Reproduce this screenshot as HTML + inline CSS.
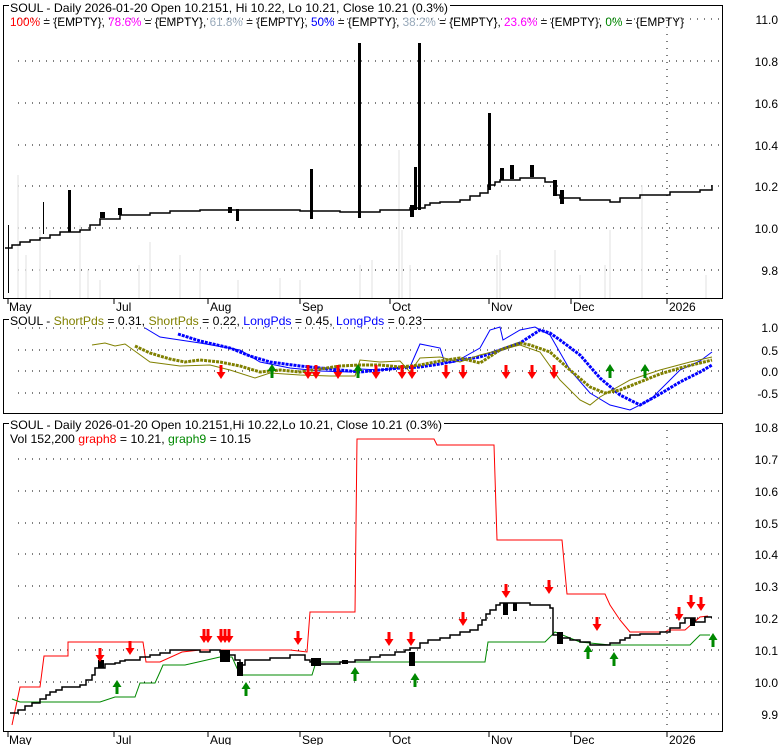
<!DOCTYPE html>
<html><head><meta charset="utf-8"><style>
html,body{margin:0;padding:0;background:#fff;}
svg{display:block;font-family:"Liberation Sans",sans-serif;}
</style></head><body>
<svg width="780" height="745" viewBox="0 0 780 745" xmlns="http://www.w3.org/2000/svg">
<defs>
<g id="dn"><path d="M0,0 l-4.5,-7 h3 v-7 h3 v7 h3 z" fill="#f00"/></g>
<g id="up"><path d="M0,0 l-4.5,7 h3 v7 h3 v-7 h3 z" fill="#080"/></g>
</defs>
<g stroke="#000" stroke-width="1" stroke-dasharray="1,6">
<line x1="18" x2="722" y1="19" y2="19"/><line x1="18" x2="722" y1="61" y2="61"/><line x1="18" x2="722" y1="103" y2="103"/><line x1="18" x2="722" y1="145" y2="145"/><line x1="18" x2="722" y1="186" y2="186"/><line x1="18" x2="722" y1="228" y2="228"/><line x1="18" x2="722" y1="270" y2="270"/>
<line x1="667" x2="667" y1="20" y2="298"/>
<line x1="18" x2="722" y1="328" y2="328"/><line x1="18" x2="722" y1="350" y2="350"/><line x1="18" x2="722" y1="371" y2="371"/><line x1="18" x2="722" y1="393" y2="393"/>
<line x1="18" x2="722" y1="459" y2="459"/><line x1="18" x2="722" y1="491" y2="491"/><line x1="18" x2="722" y1="523" y2="523"/><line x1="18" x2="722" y1="554" y2="554"/><line x1="18" x2="722" y1="586" y2="586"/><line x1="18" x2="722" y1="618" y2="618"/><line x1="18" x2="722" y1="650" y2="650"/><line x1="18" x2="722" y1="682" y2="682"/><line x1="18" x2="722" y1="714" y2="714"/>
<line x1="667" x2="667" y1="430" y2="731"/>
</g>
<g stroke="#ececec" stroke-width="1.5">
<path d="M18 298V175M26 298V255M40 298V230M50 298V290M80 298V225M88 298V270M100 298V280M139 298V265M150 298V242M180 298V255M200 298V270M238 298V280M280 298V278M300 298V280M360 298V265M372 298V260M399 298V150M402 298V230M410 298V265M497 298V255M500 298V250M555 298V250M580 298V275M605 298V265M610 298V230M642 298V185M706 298V275"/>
</g>
<path fill="none" stroke="#000" stroke-width="1.5" d="M5 248H12V245H20V242H30V240H40V238H50V235H60V232H80V230H90V225H100V219H120V215H150V213H170V211H200V210H300V211H340V212H380V210H410V208H425V205H430V203H440V202H460V200H470V196H480V193H488V185H495V182H500V180H520V178H545V182H555V195H560V198H580V200H610V202H620V198H640V195H670V192H700V190H712V185"/>
<g fill="#000">
<rect x="358" y="43" width="3" height="175"/><rect x="418" y="43" width="3" height="167"/><rect x="488" y="113" width="3" height="77"/><rect x="310" y="169" width="3" height="50"/><rect x="68" y="190" width="3" height="42"/><rect x="414" y="167" width="3" height="43"/>
<rect x="8" y="225" width="1" height="68"/><rect x="43" y="202" width="1" height="32"/>
<rect x="100" y="212" width="5" height="6"/><rect x="118" y="208" width="4" height="7"/><rect x="236" y="209" width="3" height="12"/><rect x="228" y="207" width="4" height="6"/><rect x="500" y="168" width="4" height="12"/><rect x="510" y="165" width="4" height="14"/><rect x="530" y="165" width="4" height="12"/><rect x="553" y="180" width="4" height="16"/><rect x="560" y="190" width="4" height="14"/><rect x="410" y="205" width="4" height="12"/>
</g>
<polyline fill="none" stroke="#00f" stroke-width="1" points="145,328 160,337 200,343 240,350 260,362 290,368 320,371 350,372 360,369 380,370 410,367 420,344 440,348 445,363 455,362 480,348 490,330 500,327 503,340 520,330 535,327 550,335 570,370 590,393 610,405 630,410 650,400 680,370 700,361 712,352"/>
<polyline fill="none" stroke="#00f" stroke-width="3" stroke-dasharray="3,1" points="178,334 200,341 230,348 250,356 270,362 300,366 330,369 350,371 360,372 380,370 400,368 420,367 440,364 460,360 480,357 500,350 520,343 540,330 550,333 560,340 580,355 600,378 620,395 640,405 660,394 680,382 700,372 712,365"/>
<polyline fill="none" stroke="#808000" stroke-width="1" points="92,345 105,343 115,346 125,344 150,362 180,366 210,365 230,370 255,378 270,373 300,375 330,376 355,376 360,360 380,362 400,361 410,372 420,358 440,357 460,362 480,355 500,350 520,345 540,352 560,380 580,400 590,405 600,397 630,380 660,370 690,362 712,357"/>
<polyline fill="none" stroke="#808000" stroke-width="3" stroke-dasharray="3,1" points="135,346 150,353 170,359 185,362 200,360 220,362 240,366 260,372 280,370 300,372 320,369 340,366 360,365 380,365 400,367 420,365 440,361 460,358 480,363 500,350 520,343 530,345 550,352 570,370 590,387 605,393 620,390 640,382 660,374 680,368 712,360"/>
<g>
<use href="#dn" x="221" y="379"/><use href="#dn" x="308" y="379"/><use href="#dn" x="316" y="379"/><use href="#dn" x="338" y="379"/><use href="#dn" x="376" y="379"/><use href="#dn" x="402" y="379"/><use href="#dn" x="412" y="379"/><use href="#dn" x="446" y="379"/><use href="#dn" x="463" y="379"/><use href="#dn" x="506" y="379"/><use href="#dn" x="532" y="379"/><use href="#dn" x="554" y="379"/>
<use href="#up" x="272" y="364"/><use href="#up" x="358" y="364"/><use href="#up" x="610" y="364"/><use href="#up" x="645" y="364"/>
</g>
<path fill="none" stroke="#f00" stroke-width="1" d="M12 725L20 687H40L44 656H68V642H143L146 662H160L182 652L200 650H290L307 652L310 612H355L357 439H434L437 445H494L497 540H562L567 594H605L610 605L620 620L630 632H665L668 630H685L700 617L708 616"/>
<path fill="none" stroke="#080" stroke-width="1" d="M12 699L20 702H100L115 697H135L140 683H155L160 672L163 665H185L220 657H232L240 675H312L316 662H485L488 642H545L555 632L580 642L610 645H690L700 635H710"/>
<path fill="none" stroke="#000" stroke-width="1.5" d="M10 713H18V710H25V706H32V703H40V699H46V695H50V692H56V690H62V687H80V685H86V680H92V675H95V668H105V664H115V663H120V661H125V660H140V657H150V655H160V653H170V650H200V652H210V650H220V652H228V655H235V660H240V665H245V660H270V658H290V655H305V660H310V662H320V664H340V662H355V660H370V657H380V655H395V652H405V650H410V648H420V643H428V640H440V638H450V635H460V632H470V630H478V625H482V620H486V614H490V610H496V605H500V603H530V605H550V608H553V635H560V638H570V640H580V642H590V645H600V645H610V643H620V640H625V638H630V635H640V634H660V632H670V628H680V623H685V618H695V622H705V617H712"/>
<g fill="#000">
<rect x="98" y="660" width="6" height="8"/><rect x="220" y="650" width="10" height="12"/><rect x="237" y="662" width="6" height="14"/><rect x="311" y="658" width="10" height="8"/><rect x="342" y="660" width="6" height="4"/><rect x="409" y="652" width="6" height="14"/><rect x="503" y="603" width="5" height="12"/><rect x="513" y="603" width="4" height="8"/><rect x="557" y="632" width="6" height="12"/><rect x="690" y="618" width="5" height="8"/>
</g>
<g>
<use href="#dn" x="100" y="662"/><use href="#dn" x="130" y="655"/><use href="#dn" x="204" y="643"/><use href="#dn" x="208" y="643"/><use href="#dn" x="221" y="643"/><use href="#dn" x="225" y="643"/><use href="#dn" x="229" y="643"/><use href="#dn" x="298" y="645"/><use href="#dn" x="389" y="646"/><use href="#dn" x="411" y="646"/><use href="#dn" x="463" y="626"/><use href="#dn" x="506" y="598"/><use href="#dn" x="549" y="594"/><use href="#dn" x="597" y="631"/><use href="#dn" x="679" y="621"/><use href="#dn" x="691" y="609"/><use href="#dn" x="701" y="611"/>
<use href="#up" x="117" y="680"/><use href="#up" x="246" y="682"/><use href="#up" x="355" y="667"/><use href="#up" x="415" y="673"/><use href="#up" x="588" y="645"/><use href="#up" x="614" y="652"/><use href="#up" x="713" y="633"/>
</g>
<g fill="none" stroke="#000" stroke-width="1">
<rect x="3.5" y="5.5" width="719" height="293"/>
<rect x="3.5" y="319.5" width="719" height="94"/>
<rect x="3.5" y="423.5" width="719" height="308"/>
</g>
<g fill="#fff"><rect x="9" y="0" width="441" height="14"/><rect x="9" y="314" width="414" height="12"/><rect x="9" y="418" width="435" height="12"/></g>
<g stroke="#000"><path d="M8 299v5M114 299v5M208 299v5M300 299v5M390 299v5M489 299v5M571 299v5M667 299v5M8 732v5M114 732v5M208 732v5M300 732v5M390 732v5M489 732v5M571 732v5M667 732v5"/></g>
<g font-size="12" fill="#000">
<text x="9" y="311">May</text><text x="116" y="311">Jul</text><text x="210" y="311">Aug</text><text x="302" y="311">Sep</text><text x="392" y="311">Oct</text><text x="491" y="311">Nov</text><text x="573" y="311">Dec</text><text x="669" y="311">2026</text>
<text x="9" y="744">May</text><text x="116" y="744">Jul</text><text x="210" y="744">Aug</text><text x="302" y="744">Sep</text><text x="392" y="744">Oct</text><text x="491" y="744">Nov</text><text x="573" y="744">Dec</text><text x="669" y="744">2026</text>
</g>
<g font-size="12" fill="#000" text-anchor="end">
<text x="778" y="24">11.0</text><text x="778" y="66">10.8</text><text x="778" y="108">10.6</text><text x="778" y="150">10.4</text><text x="778" y="191">10.2</text><text x="778" y="233">10.0</text><text x="778" y="275">9.8</text>
<text x="778" y="332">1.0</text><text x="778" y="355">0.5</text><text x="778" y="376">0.0</text><text x="778" y="398">-0.5</text>
<text x="778" y="432">10.8</text><text x="778" y="464">10.7</text><text x="778" y="496">10.6</text><text x="778" y="528">10.5</text><text x="778" y="559">10.4</text><text x="778" y="591">10.3</text><text x="778" y="623">10.2</text><text x="778" y="655">10.1</text><text x="778" y="687">10.0</text><text x="778" y="719">9.9</text>
</g>
<g font-size="12">
<text x="10" y="12" textLength="438" lengthAdjust="spacingAndGlyphs">SOUL - Daily 2026-01-20 Open 10.2151, Hi 10.22, Lo 10.21, Close 10.21 (0.3%)</text>
<text x="10" y="26" textLength="674" lengthAdjust="spacingAndGlyphs"><tspan fill="#f00">100%</tspan> = {EMPTY}, <tspan fill="#f0f">78.6%</tspan> = {EMPTY}, <tspan fill="#9ab">61.8%</tspan> = {EMPTY}, <tspan fill="#00f">50%</tspan> = {EMPTY}, <tspan fill="#9ab">38.2%</tspan> = {EMPTY}, <tspan fill="#f0f">23.6%</tspan> = {EMPTY}, <tspan fill="#080">0%</tspan> = {EMPTY}</text>
<text x="10" y="325" textLength="412" lengthAdjust="spacingAndGlyphs">SOUL - <tspan fill="#808000">ShortPds</tspan> = 0.31, <tspan fill="#808000">ShortPds</tspan> = 0.22, <tspan fill="#00f">LongPds</tspan> = 0.45, <tspan fill="#00f">LongPds</tspan> = 0.23</text>
<text x="10" y="429" textLength="432" lengthAdjust="spacingAndGlyphs">SOUL - Daily 2026-01-20 Open 10.2151,Hi 10.22,Lo 10.21, Close 10.21 (0.3%)</text>
<text x="10" y="443" textLength="241" lengthAdjust="spacingAndGlyphs">Vol 152,200 <tspan fill="#f00">graph8</tspan> = 10.21, <tspan fill="#080">graph9</tspan> = 10.15</text>
</g>
</svg>
</body></html>
